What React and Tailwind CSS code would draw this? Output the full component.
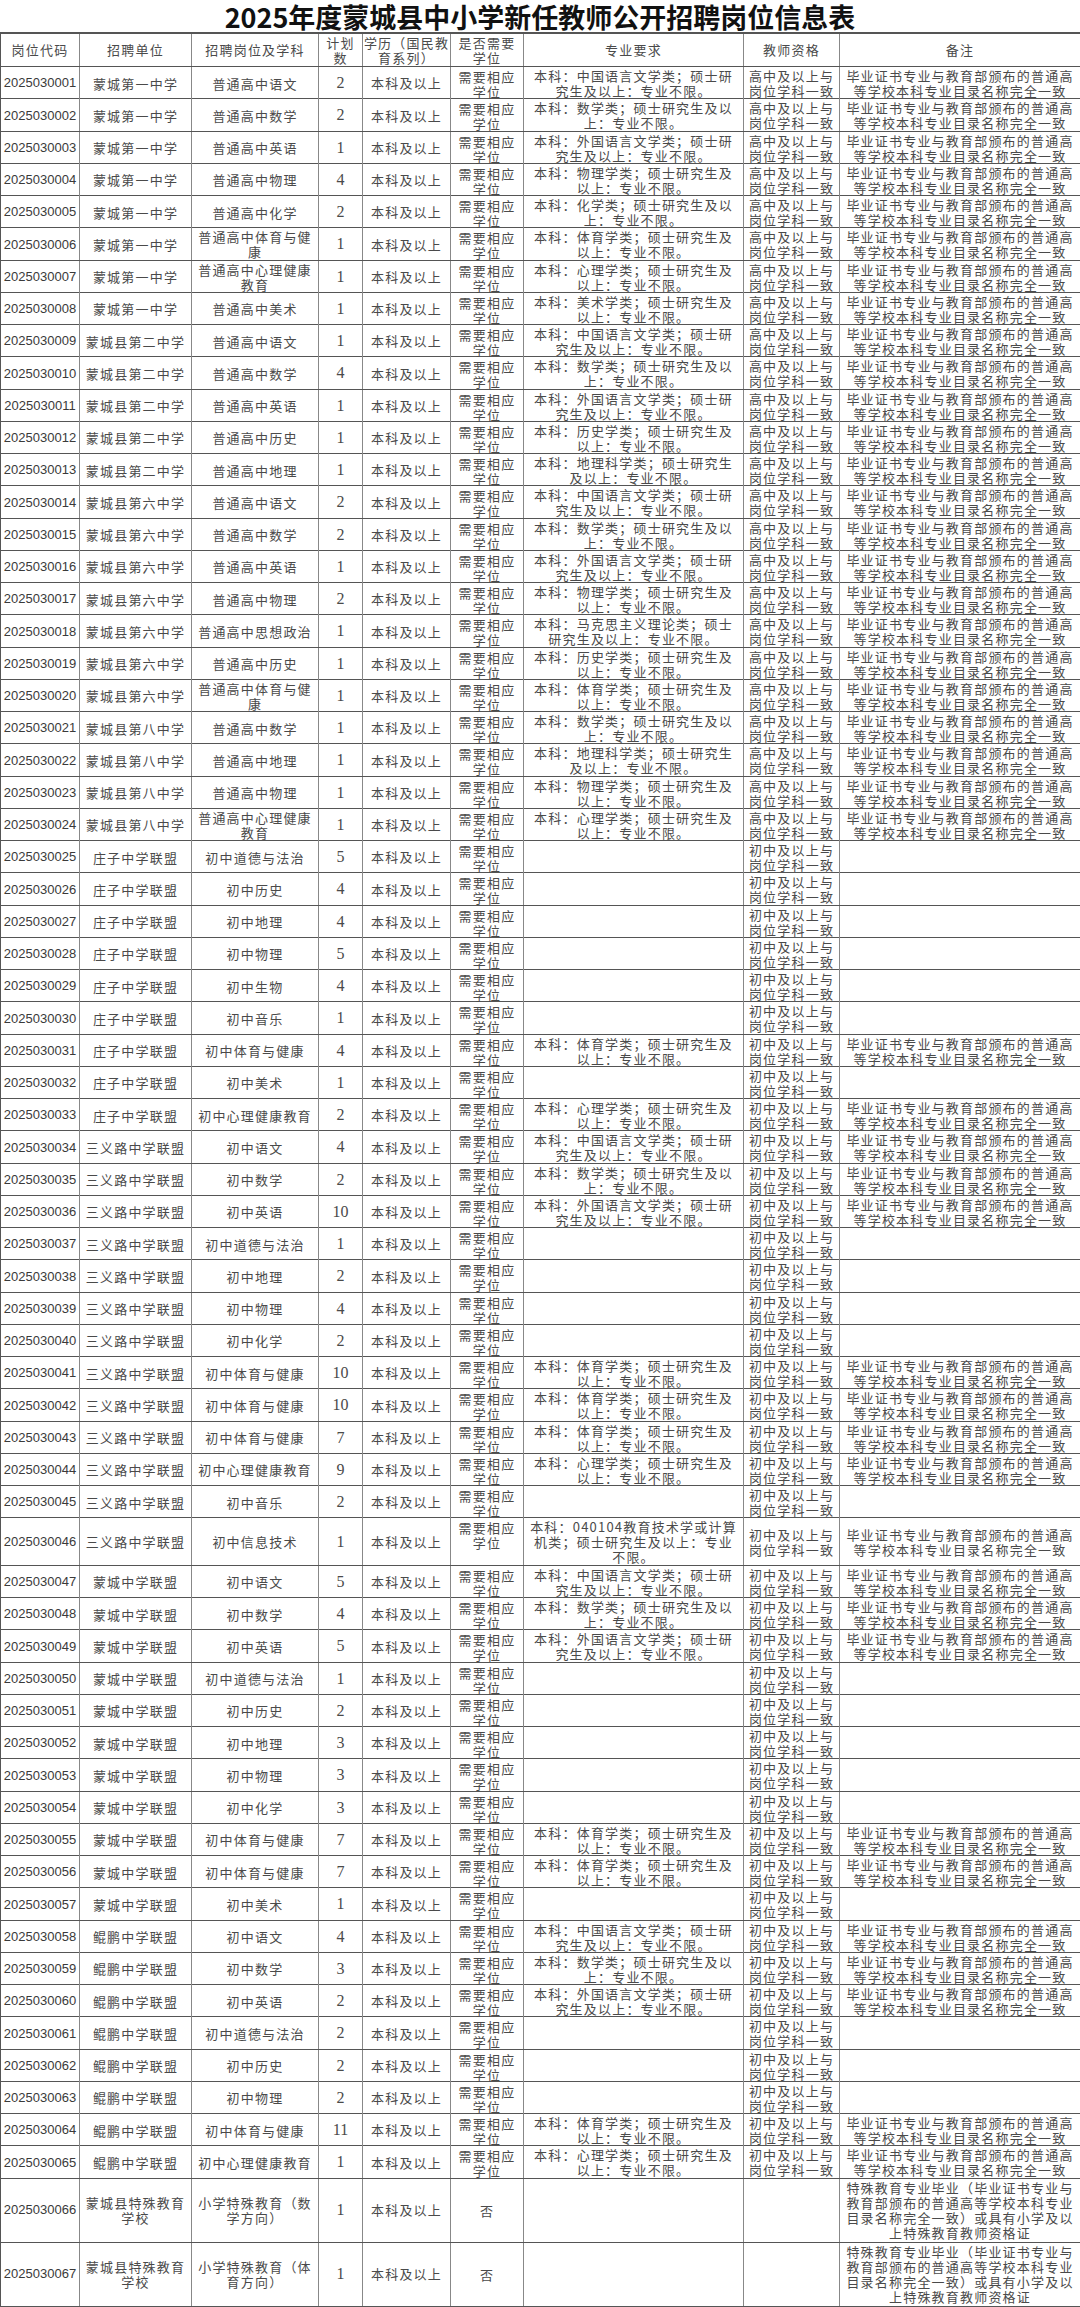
import React from 'react';

// 专业要求 text, already broken into the lines the sheet shows
const majors = {
  yuwen: ['本科：中国语言文学类；硕士研', '究生及以上：专业不限。'],
  shuxue: ['本科：数学类；硕士研究生及以', '上：专业不限。'],
  yingyu: ['本科：外国语言文学类；硕士研', '究生及以上：专业不限。'],
  wuli: ['本科：物理学类；硕士研究生及', '以上：专业不限。'],
  huaxue: ['本科：化学类；硕士研究生及以', '上：专业不限。'],
  tiyu: ['本科：体育学类；硕士研究生及', '以上：专业不限。'],
  xinli: ['本科：心理学类；硕士研究生及', '以上：专业不限。'],
  meishu: ['本科：美术学类；硕士研究生及', '以上：专业不限。'],
  lishi: ['本科：历史学类；硕士研究生及', '以上：专业不限。'],
  dili: ['本科：地理科学类；硕士研究生', '及以上：专业不限。'],
  zhengzhi: ['本科：马克思主义理论类；硕士', '研究生及以上：专业不限。'],
  xinxi: ['本科：040104教育技术学或计算', '机类；硕士研究生及以上：专业', '不限。'],
};

const noteStd = ['毕业证书专业与教育部颁布的普通高', '等学校本科专业目录名称完全一致'];
const noteSpecial = [
  '特殊教育专业毕业（毕业证书专业与',
  '教育部颁布的普通高等学校本科专业',
  '目录名称完全一致）或具有小学及以',
  '上特殊教育教师资格证',
];

// [unit, post, count, major]
const rows = [
  ['蒙城第一中学', '普通高中语文', 2, 'yuwen'],
  ['蒙城第一中学', '普通高中数学', 2, 'shuxue'],
  ['蒙城第一中学', '普通高中英语', 1, 'yingyu'],
  ['蒙城第一中学', '普通高中物理', 4, 'wuli'],
  ['蒙城第一中学', '普通高中化学', 2, 'huaxue'],
  ['蒙城第一中学', '普通高中体育与健|康', 1, 'tiyu'],
  ['蒙城第一中学', '普通高中心理健康|教育', 1, 'xinli'],
  ['蒙城第一中学', '普通高中美术', 1, 'meishu'],
  ['蒙城县第二中学', '普通高中语文', 1, 'yuwen'],
  ['蒙城县第二中学', '普通高中数学', 4, 'shuxue'],
  ['蒙城县第二中学', '普通高中英语', 1, 'yingyu'],
  ['蒙城县第二中学', '普通高中历史', 1, 'lishi'],
  ['蒙城县第二中学', '普通高中地理', 1, 'dili'],
  ['蒙城县第六中学', '普通高中语文', 2, 'yuwen'],
  ['蒙城县第六中学', '普通高中数学', 2, 'shuxue'],
  ['蒙城县第六中学', '普通高中英语', 1, 'yingyu'],
  ['蒙城县第六中学', '普通高中物理', 2, 'wuli'],
  ['蒙城县第六中学', '普通高中思想政治', 1, 'zhengzhi'],
  ['蒙城县第六中学', '普通高中历史', 1, 'lishi'],
  ['蒙城县第六中学', '普通高中体育与健|康', 1, 'tiyu'],
  ['蒙城县第八中学', '普通高中数学', 1, 'shuxue'],
  ['蒙城县第八中学', '普通高中地理', 1, 'dili'],
  ['蒙城县第八中学', '普通高中物理', 1, 'wuli'],
  ['蒙城县第八中学', '普通高中心理健康|教育', 1, 'xinli'],
  ['庄子中学联盟', '初中道德与法治', 5, null],
  ['庄子中学联盟', '初中历史', 4, null],
  ['庄子中学联盟', '初中地理', 4, null],
  ['庄子中学联盟', '初中物理', 5, null],
  ['庄子中学联盟', '初中生物', 4, null],
  ['庄子中学联盟', '初中音乐', 1, null],
  ['庄子中学联盟', '初中体育与健康', 4, 'tiyu'],
  ['庄子中学联盟', '初中美术', 1, null],
  ['庄子中学联盟', '初中心理健康教育', 2, 'xinli'],
  ['三义路中学联盟', '初中语文', 4, 'yuwen'],
  ['三义路中学联盟', '初中数学', 2, 'shuxue'],
  ['三义路中学联盟', '初中英语', 10, 'yingyu'],
  ['三义路中学联盟', '初中道德与法治', 1, null],
  ['三义路中学联盟', '初中地理', 2, null],
  ['三义路中学联盟', '初中物理', 4, null],
  ['三义路中学联盟', '初中化学', 2, null],
  ['三义路中学联盟', '初中体育与健康', 10, 'tiyu'],
  ['三义路中学联盟', '初中体育与健康', 10, 'tiyu'],
  ['三义路中学联盟', '初中体育与健康', 7, 'tiyu'],
  ['三义路中学联盟', '初中心理健康教育', 9, 'xinli'],
  ['三义路中学联盟', '初中音乐', 2, null],
  ['三义路中学联盟', '初中信息技术', 1, 'xinxi'],
  ['蒙城中学联盟', '初中语文', 5, 'yuwen'],
  ['蒙城中学联盟', '初中数学', 4, 'shuxue'],
  ['蒙城中学联盟', '初中英语', 5, 'yingyu'],
  ['蒙城中学联盟', '初中道德与法治', 1, null],
  ['蒙城中学联盟', '初中历史', 2, null],
  ['蒙城中学联盟', '初中地理', 3, null],
  ['蒙城中学联盟', '初中物理', 3, null],
  ['蒙城中学联盟', '初中化学', 3, null],
  ['蒙城中学联盟', '初中体育与健康', 7, 'tiyu'],
  ['蒙城中学联盟', '初中体育与健康', 7, 'tiyu'],
  ['蒙城中学联盟', '初中美术', 1, null],
  ['鲲鹏中学联盟', '初中语文', 4, 'yuwen'],
  ['鲲鹏中学联盟', '初中数学', 3, 'shuxue'],
  ['鲲鹏中学联盟', '初中英语', 2, 'yingyu'],
  ['鲲鹏中学联盟', '初中道德与法治', 2, null],
  ['鲲鹏中学联盟', '初中历史', 2, null],
  ['鲲鹏中学联盟', '初中物理', 2, null],
  ['鲲鹏中学联盟', '初中体育与健康', 11, 'tiyu'],
  ['鲲鹏中学联盟', '初中心理健康教育', 1, 'xinli'],
  ['蒙城县特殊教育|学校', '小学特殊教育（数|学方向）', 1, 'special'],
  ['蒙城县特殊教育|学校', '小学特殊教育（体|育方向）', 1, 'special'],
];

const gridCols =
  'grid grid-cols-[79px_112px_127px_44px_88px_73px_220px_96px_1fr] border-l border-[#555]';

const Lines = ({ lines }) => (
  <div className="leading-[15px]">
    {lines.map((l, i) => (
      <div key={i} className="whitespace-nowrap">
        {l}
      </div>
    ))}
  </div>
);

const Cell = ({ children, last, className = '' }) => (
  <div
    className={`flex items-center justify-center text-center overflow-visible ${
      last ? '' : 'border-r border-[#888]'
    } ${className}`}
  >
    {children}
  </div>
);

const Row = ({ index, row }) => {
  const [unit, post, count, major] = row;
  const isSpecial = major === 'special';
  const isHigh = index < 24;
  const majorLines = major && !isSpecial ? majors[major] : null;
  const note = isSpecial ? noteSpecial : majorLines ? noteStd : null;
  const qual = isSpecial ? null : [isHigh ? '高中及以上与' : '初中及以上与', '岗位学科一致'];
  const code = `20250300${String(index + 1).padStart(2, '0')}`;

  let height = 'h-[32.25px]';
  if (major === 'xinxi') height = 'h-[47.5px]';
  if (isSpecial) height = 'h-[64px]';

  return (
    <div className={`${gridCols} ${height} border-b border-[#444]`}>
      <Cell className="font-['Liberation_Sans',sans-serif] text-[13px] tracking-normal text-[#3a3a3a]">
        {code}
      </Cell>
      <Cell>
        <Lines lines={unit.split('|')} />
      </Cell>
      <Cell>
        <Lines lines={post.split('|')} />
      </Cell>
      <Cell className="font-['Liberation_Serif',serif] text-[16px] tracking-normal">{count}</Cell>
      <Cell>本科及以上</Cell>
      <Cell className="items-start pt-[2px]">
        {isSpecial ? <div className="self-center">否</div> : <Lines lines={['需要相应', '学位']} />}
      </Cell>
      <Cell>{majorLines && <Lines lines={majorLines} />}</Cell>
      <Cell>{qual && <Lines lines={qual} />}</Cell>
      <Cell last>{note && <Lines lines={note} />}</Cell>
    </div>
  );
};

const App = () => {
  return (
    <div className="w-[1080px] bg-white text-[#4a4a4a] font-['Noto_Sans_CJK_SC',sans-serif] text-[13px] tracking-[1.2px]">
      <div className="h-[34px] flex items-center justify-center border-b-2 border-[#555]">
        <h1 className="text-[27px] font-semibold tracking-normal text-[#111] leading-none">
          2025年度蒙城县中小学新任教师公开招聘岗位信息表
        </h1>
      </div>
      <div className={`${gridCols} h-[33px] border-b border-[#444]`}>
        <Cell>岗位代码</Cell>
        <Cell>招聘单位</Cell>
        <Cell>招聘岗位及学科</Cell>
        <Cell>
          <Lines lines={['计划', '数']} />
        </Cell>
        <Cell>
          <Lines lines={['学历（国民教', '育系列）']} />
        </Cell>
        <Cell>
          <Lines lines={['是否需要', '学位']} />
        </Cell>
        <Cell>专业要求</Cell>
        <Cell>教师资格</Cell>
        <Cell last>备注</Cell>
      </div>
      {rows.map((row, i) => (
        <Row key={i} index={i} row={row} />
      ))}
    </div>
  );
};

export default App;
